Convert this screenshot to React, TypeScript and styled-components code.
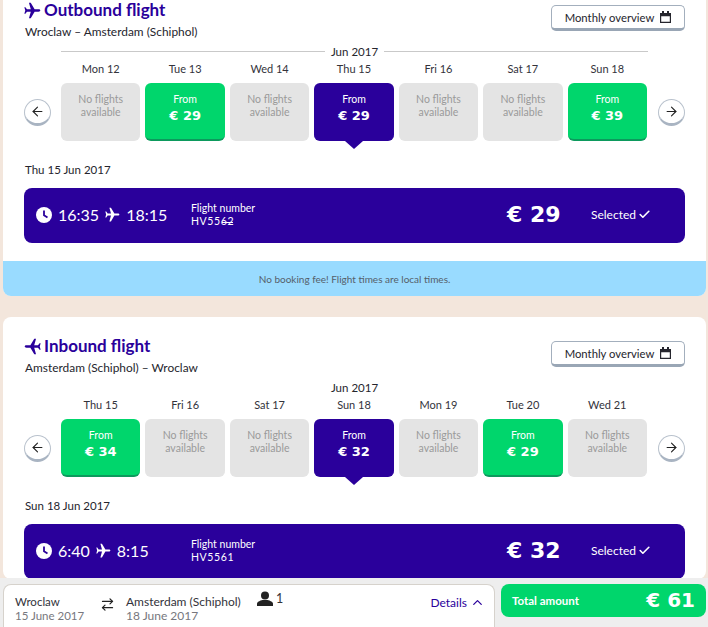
import React from 'react';
import styled, {createGlobalStyle} from 'styled-components';
import {ArrowLeft, ArrowRight, ArrowRightLeft, Check, ChevronUp} from 'lucide-react';

const navy = '#2a009b';
const green = '#00d66c';

const GlobalStyle = createGlobalStyle`
  html, body {
    margin: 0;
    height: 100%;
    overflow: hidden;
    background: #f3e6dc;
  }

  body {
    font-family: "Lato", "Liberation Sans", sans-serif;
    color: #2b2b33;
  }

  * {
    box-sizing: border-box;
  }
`;

const Page = styled.div`
  padding: 0 2px 0 3px;
`;

const Card = styled.section<{ $top: number; $gap: number }>`
  background: #fff;
  border-radius: ${p => (p.$gap ? '8px' : '0 0 8px 8px')};
  padding-top: ${p => p.$top}px;
  margin-top: ${p => p.$gap}px;
  overflow: hidden;
`;

const Inner = styled.div`
  padding: 0 21px;
`;

const Header = styled.div`
  display: flex;
  justify-content: space-between;
  align-items: flex-start;
  height: 26px;
`;

const Title = styled.h2`
  display: flex;
  align-items: center;
  gap: 3px;
  margin: -4px 0 0;
  font-size: 17px;
  line-height: 18px;
  font-weight: 700;
  color: ${navy};
`;

const Route = styled.div`
  margin-top: -7px;
  padding-left: 1px;
  font-size: 11.9px;
  line-height: 15px;
  color: #25252d;
`;

const MonthlyButton = styled.button`
  display: flex;
  align-items: center;
  justify-content: center;
  gap: 6px;
  width: 134px;
  height: 26px;
  padding: 0;
  background: #fff;
  border: 1px solid #a3afbd;
  border-bottom: 3px solid #99a6b5;
  border-radius: 5px;
  font: 11.3px "Lato", sans-serif;
  color: #25252d;
`;

const Month = styled.div<{ $lined?: boolean }>`
  display: flex;
  align-items: center;
  gap: 6px;
  margin: 4px 0 0 37px;
  width: 587px;
  height: 16px;
  font-size: 11.5px;
  color: #25252d;

  &::before, &::after {
    content: "";
    flex: 1;
    height: 1px;
    background: ${p => (p.$lined ? '#c9c9c9' : 'transparent')};
  }
`;

const DayRow = styled.div`
  display: grid;
  grid-template-columns: 32px repeat(7, 1fr) 33px;
  column-gap: 5px;
`;

const ArrowButton = styled.button`
  grid-row: 2;
  align-self: center;
  display: flex;
  align-items: center;
  justify-content: center;
  width: 27px;
  height: 27px;
  padding: 0;
  background: #fff;
  border: 1px solid #b9c2cd;
  border-bottom: 3px solid #a9b4c2;
  border-radius: 50%;
  color: #222;
`;

const PrevButton = styled(ArrowButton)`
  grid-column: 1;
`;

const NextButton = styled(ArrowButton)`
  grid-column: 9;
  justify-self: end;
`;

const DayLabel = styled.div<{ $col: number }>`
  grid-row: 1;
  grid-column: ${p => p.$col};
  height: 24px;
  padding-top: 2px;
  text-align: center;
  font-size: 11px;
  line-height: 15px;
  color: #33333b;
`;

const tileColors = {
  empty: {bg: '#e4e4e4', fg: '#9a9a9a', edge: '#e4e4e4'},
  open: {bg: green, fg: '#fff', edge: '#0c9a5d'},
  selected: {bg: navy, fg: '#fff', edge: navy},
};

type TileKind = keyof typeof tileColors;

const Tile = styled.div<{ $kind: TileKind; $col: number }>`
  position: relative;
  grid-row: 2;
  grid-column: ${p => p.$col};
  height: 58px;
  padding-top: 10px;
  border-radius: 6px;
  border-bottom: 2px solid ${p => tileColors[p.$kind].edge};
  background: ${p => tileColors[p.$kind].bg};
  color: ${p => tileColors[p.$kind].fg};
  text-align: center;
  font-size: 10.5px;
  line-height: 13px;

  ${p => p.$kind === 'selected' && `
    &::after {
      content: "";
      position: absolute;
      left: 50%;
      bottom: -10px;
      margin-left: -9px;
      border-style: solid;
      border-width: 8px 9px 0;
      border-color: ${navy} transparent transparent;
    }
  `}
`;

const TilePrice = styled.div`
  margin-top: 2px;
  font-family: "DejaVu Sans", sans-serif;
  font-weight: 700;
  font-size: 13px;
  line-height: 15px;
`;

const FlightDate = styled.div`
  margin-top: 21px;
  padding-left: 1px;
  font-size: 11.5px;
  line-height: 15px;
  color: #25252d;
`;

const FlightBar = styled.div`
  display: flex;
  align-items: center;
  margin-top: 11px;
  height: 55px;
  padding: 0 34px 2px 12px;
  background: ${navy};
  border-radius: 8px;
  color: #fff;
`;

const Times = styled.div`
  display: flex;
  align-items: center;
  gap: 6px;
  width: 155px;
  font-size: 16px;
`;

const FlightInfo = styled.div`
  flex: 1;
  font-size: 10.5px;
  line-height: 13px;
`;

const FlightNumber = styled.span<{ $tail?: boolean }>`
  position: relative;
  display: inline-block;
  letter-spacing: 0.6px;

  ${p => p.$tail && `
    &::after {
      content: "";
      position: absolute;
      left: 31px;
      top: 7px;
      width: 11px;
      height: 1px;
      background: #fff;
    }
  `}
`;

const Price = styled.div`
  width: 84px;
  font-family: "DejaVu Sans", sans-serif;
  font-weight: 700;
  font-size: 22px;
`;

const Selected = styled.div`
  display: flex;
  align-items: center;
  gap: 2px;
  font-size: 12px;
`;

const Notice = styled.div`
  margin-top: 18px;
  height: 35px;
  background: #99dbff;
  display: flex;
  align-items: center;
  justify-content: center;
  font-size: 10px;
  color: #55606a;
`;

const Footer = styled.footer`
  position: fixed;
  left: 0;
  right: 0;
  bottom: 0;
  height: 49px;
  display: flex;
  align-items: flex-start;
  gap: 6px;
  padding: 6px 2px 0 3px;
  background: #eeeeee;
`;

const Summary = styled.div`
  display: flex;
  align-items: flex-start;
  width: 492px;
  height: 43px;
  padding: 10px 9px 0 11px;
  background: #fff;
  border: 1px solid #d6d2cc;
  border-bottom: 0;
  border-radius: 8px 8px 0 0;
`;

const Place = styled.div`
  font-size: 11.5px;
  line-height: 14px;
  color: #33333b;
`;

const PlaceDate = styled.div`
  color: #77777d;
`;

const FromPlace = styled(Place)`
  width: 85px;
`;

const ToPlace = styled(Place)`
  width: 131px;
  font-size: 12px;
`;

const SwapIcon = styled.div`
  width: 26px;
  padding-top: 1px;
  color: #222;
`;

const Passengers = styled.div`
  display: flex;
  align-items: center;
  gap: 3px;
  margin-top: -4px;
  font-size: 12.5px;
  color: #33333b;
`;

const Details = styled.div`
  display: flex;
  align-items: center;
  gap: 3px;
  margin-left: auto;
  font-size: 12px;
  line-height: 14px;
  color: ${navy};
`;

const Total = styled.div`
  flex: 1;
  height: 33px;
  display: flex;
  align-items: center;
  justify-content: space-between;
  padding: 0 11px;
  background: ${green};
  border-radius: 8px;
  color: #fff;
`;

const TotalLabel = styled.div`
  font-size: 11.5px;
  font-weight: 700;
`;

const TotalValue = styled.div`
  margin-top: -2px;
  font-family: "DejaVu Sans", sans-serif;
  font-weight: 700;
  font-size: 20px;
`;

const PlaneSvg = styled.svg<{ $flip?: boolean }>`
  transform: ${p => (p.$flip ? 'scaleX(-1)' : 'none')};
`;

const PlaneIcon = ({size, flip}: { size: number; flip?: boolean }) => (
    <PlaneSvg $flip={flip} width={size} height={size} viewBox="0 0 24 24" fill="currentColor">
        <path d="M23 12c0-1-1-1.700-2.500-1.700H15L9.500 1H7l2.600 9.300H4.200L2 7.300H.5L1.800 12 .5 16.700H2l2.200-3h5.400L7 23h2.500l5.500-9.300h5.500C22 13.700 23 13 23 12z"/>
    </PlaneSvg>
);

const ClockIcon = () => (
    <svg width="16" height="16" viewBox="0 0 16 16">
        <circle cx="8" cy="8" r="8" fill="#fff"/>
        <path d="M8 3.500V8.300L11.500 10.500" fill="none" stroke={navy} strokeWidth="1.800"/>
    </svg>
);

const CalendarIcon = () => (
    <svg width="11" height="12" viewBox="0 0 11 12" fill="#25252d">
        <path d="M0 2h2V0h2v2h3V0h2v2h2v10H0zM1.200 5.200v5.600h8.600V5.200z"/>
    </svg>
);

const PersonIcon = () => (
    <svg width="16" height="15" viewBox="0 0 16 15" fill="#222">
        <circle cx="8" cy="4.500" r="4"/>
        <path d="M0 15v-2.500c0-1.500 3-3 5.500-3.500h5c2.500.5 5.500 2 5.500 3.500V15z"/>
    </svg>
);

interface IDay {
    label: string;
    kind: TileKind;
    price?: number;
}

interface IFlight {
    title: string;
    flip?: boolean;
    route: string;
    lined?: boolean;
    days: IDay[];
    date: string;
    depart: string;
    arrive: string;
    number: string;
    tail?: boolean;
    price: number;
}

const outbound: IFlight = {
    title: 'Outbound flight',
    route: 'Wroclaw – Amsterdam (Schiphol)',
    lined: true,
    days: [
        {label: 'Mon 12', kind: 'empty'},
        {label: 'Tue 13', kind: 'open', price: 29},
        {label: 'Wed 14', kind: 'empty'},
        {label: 'Thu 15', kind: 'selected', price: 29},
        {label: 'Fri 16', kind: 'empty'},
        {label: 'Sat 17', kind: 'empty'},
        {label: 'Sun 18', kind: 'open', price: 39},
    ],
    date: 'Thu 15 Jun 2017',
    depart: '16:35',
    arrive: '18:15',
    number: 'HV5562',
    tail: true,
    price: 29,
};

const inbound: IFlight = {
    title: 'Inbound flight',
    flip: true,
    route: 'Amsterdam (Schiphol) – Wroclaw',
    days: [
        {label: 'Thu 15', kind: 'open', price: 34},
        {label: 'Fri 16', kind: 'empty'},
        {label: 'Sat 17', kind: 'empty'},
        {label: 'Sun 18', kind: 'selected', price: 32},
        {label: 'Mon 19', kind: 'empty'},
        {label: 'Tue 20', kind: 'open', price: 29},
        {label: 'Wed 21', kind: 'empty'},
    ],
    date: 'Sun 18 Jun 2017',
    depart: '6:40',
    arrive: '8:15',
    number: 'HV5561',
    price: 32,
};

const FlightSection = ({flight}: { flight: IFlight }) => (
    <Inner>
        <Header>
            <Title><PlaneIcon size={17} flip={flight.flip}/>{flight.title}</Title>
            <MonthlyButton>Monthly overview <CalendarIcon/></MonthlyButton>
        </Header>
        <Route>{flight.route}</Route>
        <Month $lined={flight.lined}>Jun 2017</Month>
        <DayRow>
            <PrevButton><ArrowLeft size={15} strokeWidth={1.8}/></PrevButton>
            {flight.days.map((day, i) => (
                <DayLabel key={day.label} $col={i + 2}>{day.label}</DayLabel>
            ))}
            {flight.days.map((day, i) => (
                <Tile key={day.label} $kind={day.kind} $col={i + 2}>
                    {day.price
                        ? <>From<TilePrice>€ {day.price}</TilePrice></>
                        : <>No flights<br/>available</>}
                </Tile>
            ))}
            <NextButton><ArrowRight size={15} strokeWidth={1.8}/></NextButton>
        </DayRow>
        <FlightDate>{flight.date}</FlightDate>
        <FlightBar>
            <Times>
                <ClockIcon/>{flight.depart}<PlaneIcon size={15}/>{flight.arrive}
            </Times>
            <FlightInfo>
                Flight number<br/>
                <FlightNumber $tail={flight.tail}>{flight.number}</FlightNumber>
            </FlightInfo>
            <Price>€ {flight.price}</Price>
            <Selected>Selected <Check size={13} strokeWidth={3}/></Selected>
        </FlightBar>
    </Inner>
);

const App = () => (
    <Page>
        <GlobalStyle/>
        <Card $top={5} $gap={0}>
            <FlightSection flight={outbound}/>
            <Notice>No booking fee! Flight times are local times.</Notice>
        </Card>
        <Card $top={24} $gap={21}>
            <FlightSection flight={inbound}/>
        </Card>
        <Footer>
            <Summary>
                <FromPlace>Wroclaw<PlaceDate>15 June 2017</PlaceDate></FromPlace>
                <SwapIcon><ArrowRightLeft size={15} strokeWidth={2}/></SwapIcon>
                <ToPlace>Amsterdam (Schiphol)<PlaceDate>18 June 2017</PlaceDate></ToPlace>
                <Passengers><PersonIcon/>1</Passengers>
                <Details>Details <ChevronUp size={15}/></Details>
            </Summary>
            <Total>
                <TotalLabel>Total amount</TotalLabel>
                <TotalValue>€ 61</TotalValue>
            </Total>
        </Footer>
    </Page>
);

export default App;
